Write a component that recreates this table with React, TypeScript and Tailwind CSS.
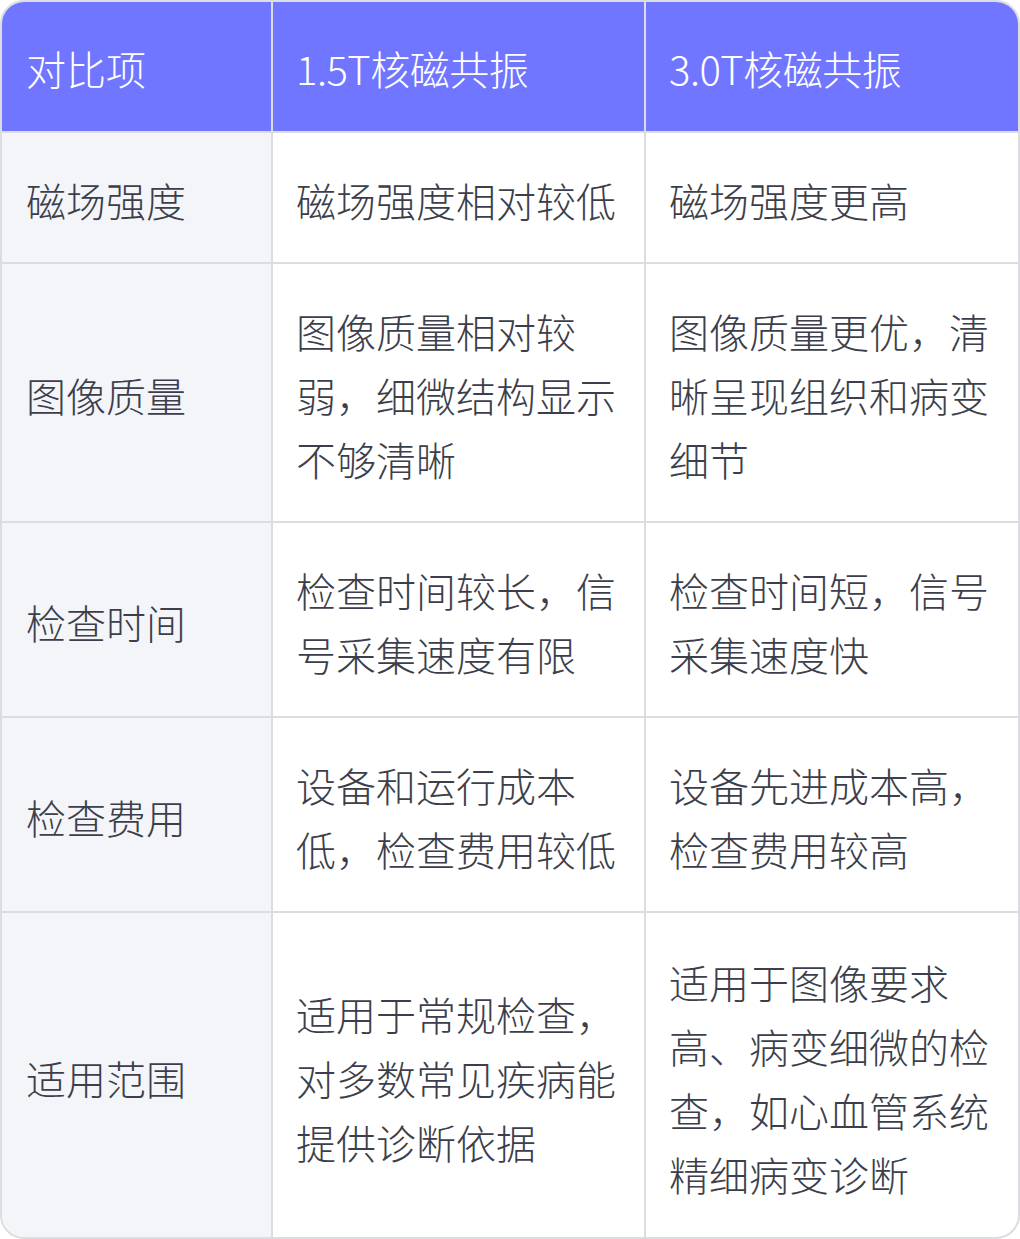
import React from "react";

const rows: [string, string, string][] = [
  ["磁场强度", "磁场强度相对较低", "磁场强度更高"],
  ["图像质量", "图像质量相对较弱，细微结构显示不够清晰", "图像质量更优，清晰呈现组织和病变细节"],
  ["检查时间", "检查时间较长，信号采集速度有限", "检查时间短，信号采集速度快"],
  ["检查费用", "设备和运行成本低，检查费用较低", "设备先进成本高，检查费用较高"],
  ["适用范围", "适用于常规检查，对多数常见疾病能提供诊断依据", "适用于图像要求高、病变细微的检查，如心血管系统精细病变诊断"],
];

export default function App() {
  return (
    <div
      className="w-[1020px] h-[1239px] bg-white"
      style={{ fontFamily: '"Noto Sans CJK SC", "Noto Sans", sans-serif' }}
    >
      <div className="w-[1020px] h-[1239px] flex flex-col border-2 border-[#dcdde1] rounded-[24px] overflow-hidden text-[40px] leading-[64px] font-light">
        <div className="grid grid-cols-[271px_373px_372px] bg-[#7076ff] text-white">
          <div className="pl-[24px] pr-[24px] pt-[34px] pb-[31px] border-r-2 border-[#dcdde1]">对比项</div>
          <div className="pl-[23px] pr-[24px] pt-[34px] pb-[31px] border-r-2 border-[#dcdde1] tracking-[-0.5px]">1.5T核磁共振</div>
          <div className="pl-[23px] pr-[24px] pt-[34px] pb-[31px] tracking-[-0.5px]">3.0T核磁共振</div>
        </div>
        {rows.map((r, i) => (
          <div
            key={i}
            className={
              "grid grid-cols-[271px_373px_372px] border-t-2 border-[#dcdde1] text-[#3c3f4b]" +
              (i === rows.length - 1 ? " flex-1" : "")
            }
          >
            <div className="flex items-center bg-[#f4f5f9] pl-[24px] pr-[20px] pt-[35px] pb-[30px] border-r-2 border-[#dcdde1]">
              {r[0]}
            </div>
            <div className="flex items-center pl-[23px] pr-[24px] pt-[35px] pb-[30px] border-r-2 border-[#dcdde1]">
              <span>{r[1]}</span>
            </div>
            <div className="flex items-center pl-[23px] pr-[24px] pt-[35px] pb-[30px]">
              <span>{r[2]}</span>
            </div>
          </div>
        ))}
      </div>
    </div>
  );
}
